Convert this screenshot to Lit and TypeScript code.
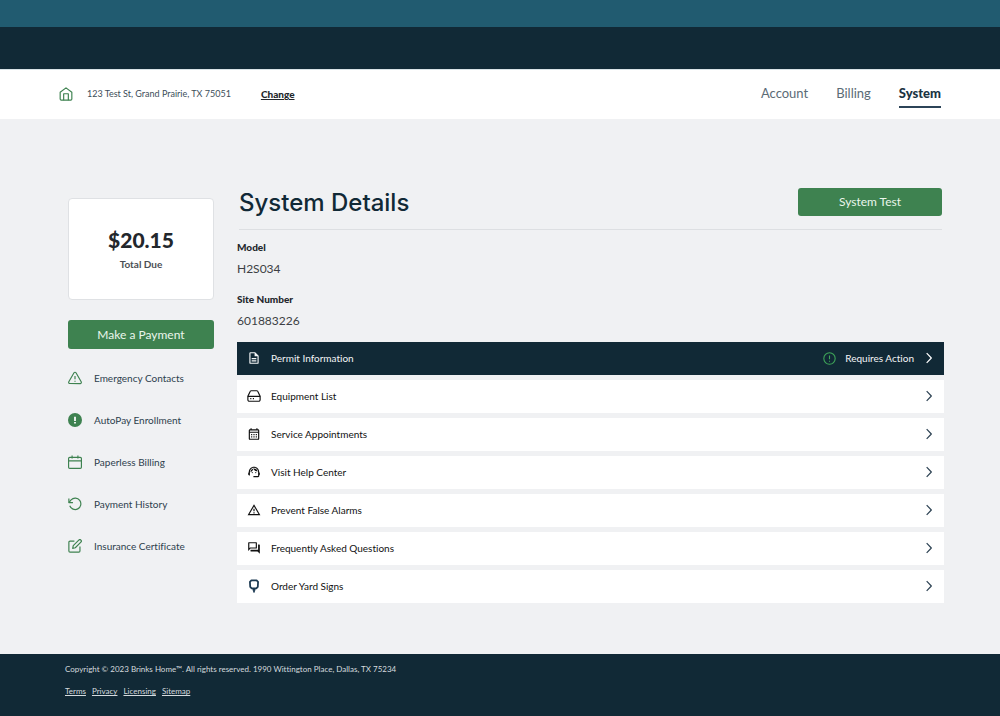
import { LitElement, html, css, svg, SVGTemplateResult } from "lit";
import { customElement, property } from "lit/decorators.js";
import { classMap } from "lit/directives/class-map.js";

const icons: Record<string, SVGTemplateResult> = {
  home: svg`<path d="M2 9 12 1.5 22 9V20.5a2 2 0 0 1-2 2H4a2 2 0 0 1-2-2z"/><path d="M8 22.5v-11h8v11"/>`,
  alert: svg`<path d="M10.3 3.1 1.4 18.5a2 2 0 0 0 1.7 3h17.8a2 2 0 0 0 1.7-3L13.7 3.1a2 2 0 0 0-3.4 0z"/><path d="M12 8.5v5.5M12 16.5v2"/>`,
  badge: svg`<circle class="solid" cx="12" cy="12" r="12"/><path class="mark" d="M12 6.5v7M12 15.6v2.2"/>`,
  calendar: svg`<rect x="1" y="4" width="22" height="19" rx="2"/><path d="M7 1v5M17 1v5M1 10h22"/>`,
  history: svg`<path d="M1.5 2.5v7H8.5"/><path d="M3 15a9.8 9.8 0 1 0 2.3-10.2L1.5 9.5"/>`,
  edit: svg`<path d="M11 3.5H3.5a2 2 0 0 0-2 2v15a2 2 0 0 0 2 2h15a2 2 0 0 0 2-2V13"/><path d="M18.5 1.8a2.5 2.5 0 0 1 3.6 3.6L12.5 15 8 16l1-4.5z"/>`,
  document: svg`<path class="fill" d="M8 16h8v2H8zm0-4h8v2H8zm6-10H6a2 2 0 0 0-2 2v16a2 2 0 0 0 2 2h12a2 2 0 0 0 2-2V8zm4 18H6V4h7v5h5z"/>`,
  drive: svg`<path d="M1.5 12.5 5 5A2.5 2.5 0 0 1 7.2 3h9.6A2.5 2.5 0 0 1 19 5L22.5 12.5v6A2.5 2.5 0 0 1 20 21H4A2.5 2.5 0 0 1 1.5 18.5z"/><path d="M1.5 12.5h21M5.5 16.5h2M10 16.5h2"/>`,
  schedule: svg`<path class="fill" d="M19 4h-1V2h-2v2H8V2H6v2H5a2 2 0 0 0-2 2v14a2 2 0 0 0 2 2h14a2 2 0 0 0 2-2V6a2 2 0 0 0-2-2zm0 16H5V10h14zm0-12H5V6h14zM7 12h2v2H7zm4 0h2v2h-2zm4 0h2v2h-2zM7 16h2v2H7zm4 0h2v2h-2zm4 0h2v2h-2z"/>`,
  agent: svg`<path class="fill" d="M21 12.22C21 6.73 16.74 3 12 3c-4.69 0-9 3.65-9 9.28-.6.34-1 .98-1 1.72v2c0 1.1.9 2 2 2h1v-6.1c0-3.87 3.13-7 7-7s7 3.13 7 7V19h-8v2h8c1.1 0 2-.9 2-2v-1.22c.59-.31 1-.92 1-1.64v-2.3c0-.7-.41-1.31-1-1.62z"/><circle class="fill" cx="9" cy="13" r="1"/><circle class="fill" cx="15" cy="13" r="1"/><path class="fill" d="M18 11.03A6.04 6.04 0 0 0 12.05 6c-3.03 0-6.29 2.51-6.03 6.45a8.075 8.075 0 0 0 4.86-5.89c1.31 2.63 4 4.44 7.12 4.47z"/>`,
  warning: svg`<path class="fill" d="M12 5.99 19.53 19H4.47zM12 2 1 21h22zm1 14h-2v2h2zm0-6h-2v4h2z"/>`,
  forum: svg`<path class="fill" d="M15 4v7H5.17L4 12.17V4zm1-2H3a1 1 0 0 0-1 1v14l4-4h10a1 1 0 0 0 1-1V3a1 1 0 0 0-1-1zm5 4h-2v9H6v2a1 1 0 0 0 1 1h11l4 4V7a1 1 0 0 0-1-1z"/>`,
  sign: svg`<path class="bold" d="M7.5 2.5h9L19 5l-.5 8.5L16 16H8l-2.5-2.5L5 5zM12 16v7M9.5 18h5"/>`,
  notice: svg`<circle cx="12" cy="12" r="10.5"/><path d="M12 6.5v7M12 16v1.8"/>`,
  chevron: svg`<path d="m8 3.5 8 8.5-8 8.5"/>`,
};

@customElement("line-icon")
export class LineIcon extends LitElement {
  static styles = css`
    :host { display: inline-flex; flex: none; }
    svg { display: block; width: 100%; height: 100%; fill: none; stroke: currentColor; stroke-width: 2; stroke-linejoin: round; }
    .fill, .solid { fill: currentColor; stroke: none; }
    .bold, .mark { stroke-width: 3; }
    .mark { stroke: #fff; }
  `;
  @property() name = "";
  render() {
    return html`<svg viewBox="0 0 24 24" aria-hidden="true">${icons[this.name]}</svg>`;
  }
}

@customElement("app-root")
export class AppRoot extends LitElement {
  static styles = css`
    :host {
      display: flex;
      flex-direction: column;
      min-height: 100vh;
      background: #f0f1f3;
      color: #23272c;
      font-family: Lato, "Open Sans", sans-serif;
      font-variant-ligatures: none;
      font-size: 10px;
      line-height: 14px;
    }
    *, *::before { box-sizing: border-box; }
    h1, p, ul, dl, dd { margin: 0; padding: 0; }
    ul { list-style: none; }
    a { color: inherit; text-decoration: none; }
    button { border: 0; border-radius: 3px; background: #3e8250; color: #eaf6ec; font: inherit; font-size: 12px; cursor: pointer; }
    line-icon { width: 14px; height: 14px; }
    .promo { height: 27px; background: #215b70; }
    .brand { height: 42px; background: #112936; }
    .bar {
      display: flex;
      align-items: center;
      height: 50px;
      padding: 0 59px 1px;
      background: #fff;
      border-top: 1px solid #d9e3e7;
      color: #3c4e59;
    }
    .bar line-icon { color: #3e8250; margin-right: 14px; }
    .address { font-size: 9px; }
    .change { margin-left: 30px; font-weight: 900; color: #23272c; text-decoration: underline; }
    .tabs { display: flex; gap: 28px; margin-left: auto; font-size: 13px; line-height: 26px; color: #5b6b76; }
    .tabs a { border-bottom: 2px solid transparent; }
    .tabs .current { border-color: #2c4458; color: #1b3442; font-weight: 900; }
    .page {
      flex: 1;
      display: grid;
      grid-template-columns: 146px minmax(0, 1fr);
      gap: 23px;
      align-items: start;
      padding: 69px 56px 50px 68px;
    }
    .side { padding-top: 10px; }
    .due {
      display: flex;
      flex-direction: column;
      align-items: center;
      justify-content: center;
      gap: 4px;
      height: 102px;
      background: #fff;
      border: 1px solid #dfe1e4;
      border-radius: 4px;
    }
    .amount { font-size: 21px; line-height: 26px; font-weight: 900; }
    .caption { font-weight: 700; color: #4b4e54; }
    .pay { display: block; width: 100%; height: 29px; margin: 20px 0 22px; }
    .links { display: grid; gap: 28px; color: #2d404d; }
    .links a { display: flex; align-items: center; gap: 12px; }
    .links line-icon { color: #3e8250; }
    .title { display: flex; align-items: center; justify-content: space-between; height: 42px; margin: 0 2px; padding-bottom: 13px; border-bottom: 1px solid #dddfe2; }
    h1 { padding-top: 2px; font-family: Inter, sans-serif; font-size: 24px; line-height: 30px; font-weight: 500; color: #112936; }
    .test { width: 144px; height: 28px; }
    .facts { padding-top: 10px; }
    dt { font-weight: 900; }
    dd { padding: 6px 0 15px; font-size: 12px; line-height: 17px; color: #3c3f44; }
    .rows { display: grid; gap: 5px; margin-top: -2px; }
    .row { display: flex; align-items: center; height: 33px; padding: 0 8px 1px 10px; background: #fff; color: #111; }
    .row .label { flex: 1; padding-left: 10px; }
    .row .chevron { color: #2c4152; }
    .active { background: #112936; color: #f4f6f7; }
    .row.active .chevron { color: #fff; }
    .status { display: flex; align-items: center; gap: 9px; padding-right: 8px; }
    .status line-icon { width: 13px; height: 13px; color: #3fa659; }
    .row .navy { color: #1c3a52; }
    footer { padding: 8px 65px 18px; background: #112936; color: #d5dbdf; font-size: 8px; }
    .legal { display: flex; gap: 6px; margin-top: 8px; }
    .legal a { text-decoration: underline; }
  `;

  private shortcuts = [
    ["alert", "Emergency Contacts"],
    ["badge", "AutoPay Enrollment"],
    ["calendar", "Paperless Billing"],
    ["history", "Payment History"],
    ["edit", "Insurance Certificate"],
  ];

  private sections = [
    { icon: "document", label: "Permit Information", status: "Requires Action" },
    { icon: "drive", label: "Equipment List" },
    { icon: "schedule", label: "Service Appointments" },
    { icon: "agent", label: "Visit Help Center" },
    { icon: "warning", label: "Prevent False Alarms" },
    { icon: "forum", label: "Frequently Asked Questions" },
    { icon: "sign", label: "Order Yard Signs", navy: true },
  ];

  render() {
    return html`
      <div class="promo"></div>
      <div class="brand"></div>
      <header class="bar">
        <line-icon name="home"></line-icon>
        <span class="address">123 Test St, Grand Prairie, TX 75051</span>
        <a class="change" href="#change">Change</a>
        <nav class="tabs">
          <a href="#account">Account</a>
          <a href="#billing">Billing</a>
          <a class="current" href="#system" aria-current="page">System</a>
        </nav>
      </header>
      <main class="page">
        <aside class="side">
          <div class="due">
            <span class="amount">$20.15</span>
            <span class="caption">Total Due</span>
          </div>
          <button class="pay">Make a Payment</button>
          <ul class="links">
            ${this.shortcuts.map(
              ([icon, label]) => html`<li><a href="#${icon}"><line-icon name=${icon}></line-icon>${label}</a></li>`
            )}
          </ul>
        </aside>
        <section>
          <div class="title">
            <h1>System Details</h1>
            <button class="test">System Test</button>
          </div>
          <dl class="facts">
            <dt>Model</dt>
            <dd>H2S034</dd>
            <dt>Site Number</dt>
            <dd>601883226</dd>
          </dl>
          <ul class="rows">
            ${this.sections.map(
              (s) => html`<li>
                <a class=${classMap({ row: true, active: !!s.status })} href="#${s.icon}">
                  <line-icon class=${classMap({ navy: !!s.navy })} name=${s.icon}></line-icon>
                  <span class="label">${s.label}</span>
                  ${s.status ? html`<span class="status"><line-icon name="notice"></line-icon>${s.status}</span>` : ""}
                  <line-icon class="chevron" name="chevron"></line-icon>
                </a>
              </li>`
            )}
          </ul>
        </section>
      </main>
      <footer>
        <p>Copyright © 2023 Brinks Home™. All rights reserved. 1990 Wittington Place, Dallas, TX 75234</p>
        <nav class="legal">
          <a href="#terms">Terms</a>
          <a href="#privacy">Privacy</a>
          <a href="#licensing">Licensing</a>
          <a href="#sitemap">Sitemap</a>
        </nav>
      </footer>
    `;
  }
}
